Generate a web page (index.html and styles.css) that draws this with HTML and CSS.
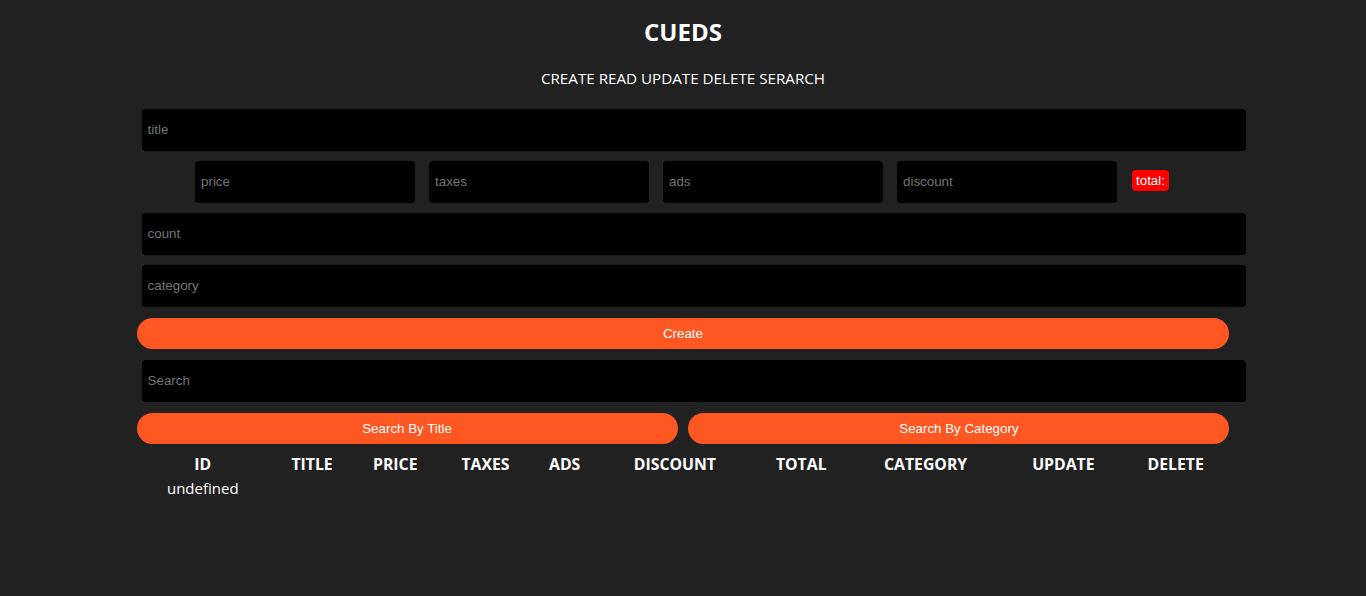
FILE: index.html
```
<!DOCTYPE html>
<html>
<head>
<meta charset="utf-8">
<title>CRUDS</title>
<link rel="stylesheet" href="styles.css">
</head>
<body>
<div class="crud">
  <div class="head">
    <h2>CUEDS</h2>
    <p>CREATE READ UPDATE DELETE SERARCH</p>
  </div>
  <div class="inputs">
    <input type="text" class="field" placeholder="title">
    <div class="price">
      <input type="number" class="small" placeholder="price">
      <input type="number" class="small" placeholder="taxes">
      <input type="number" class="small" placeholder="ads">
      <input type="number" class="small" placeholder="discount">
      <small class="total">total:</small>
    </div>
    <input type="number" class="field" placeholder="count">
    <input type="text" class="field" placeholder="category">
    <button class="btn btn-create">Create</button>
  </div>
  <div class="outputs">
    <input type="text" class="field" placeholder="Search">
    <div class="btnSearch">
      <button class="btn">Search By Title</button>
      <button class="btn">Search By Category</button>
    </div>
  </div>
  <table class="table">
    <thead>
      <tr>
        <th class="c1">ID</th>
        <th class="c2">TITLE</th>
        <th class="c3">PRICE</th>
        <th class="c4">TAXES</th>
        <th class="c5">ADS</th>
        <th class="c6">DISCOUNT</th>
        <th class="c7">TOTAL</th>
        <th class="c8">CATEGORY</th>
        <th class="c9">UPDATE</th>
        <th class="c10">DELETE</th>
      </tr>
    </thead>
    <tbody>
      <tr><td>undefined</td></tr>
    </tbody>
  </table>
</div>
</body>
</html>
```
FILE: styles.css
```
html, body {
  margin: 0;
  padding: 0;
}
body {
  background-color: #222121;
  color: #fff;
  font-family: "Open Sans", "Noto Sans", sans-serif;
}
.crud {
  width: 80%;
  margin: 0 auto;
}
.head {
  text-align: center;
}
.head h2 {
  margin: 16px 0 0;
  font-size: 24px;
  line-height: 32px;
  font-weight: 700;
}
.head p {
  margin: 19px 0 0;
  font-size: 15.2px;
  line-height: 22px;
}
.inputs {
  margin-top: 20px;
  display: flex;
  flex-direction: column;
}
input {
  box-sizing: border-box;
  height: 42px;
  border: none;
  outline: none;
  background: #000;
  color: #fff;
  border-radius: 4px;
  padding: 0 6px 2px;
  font-family: "Liberation Sans", Arial, sans-serif;
  font-size: 13.33px;
}
input::placeholder {
  color: #757575;
}
.field {
  display: block;
  width: calc(100% + 12px);
  margin: 0 0 10px 5px;
}
.price {
  display: flex;
  justify-content: center;
  align-items: center;
  gap: 14px;
  margin: 0 0 10px -2px;
}
.small {
  width: 220px;
}
.total {
  margin: 0 0 3px 1px;
  background: #f00;
  color: #fff;
  border-radius: 4px;
  padding: 0 4px;
  height: 21px;
  line-height: 21px;
  font-family: "Liberation Sans", Arial, sans-serif;
  font-size: 13.33px;
}
.btn {
  height: 31px;
  border: none;
  border-radius: 20px;
  background: #ff5722;
  color: #fff;
  font-family: "Liberation Sans", Arial, sans-serif;
  font-size: 13.33px;
  cursor: pointer;
}
.btn-create {
  width: 100%;
  margin: 1px 0 11px;
}
.outputs {
  display: flex;
  flex-direction: column;
}
.btnSearch {
  display: flex;
  justify-content: space-between;
  margin-top: 1px;
}
.btnSearch .btn {
  width: 49.5%;
}
.table {
  width: 100%;
  table-layout: fixed;
  border-spacing: 0;
  margin-top: 9px;
  text-align: center;
}
.table th {
  font-size: 15.8px;
  font-weight: 700;
  line-height: 22px;
  padding: 0;
}
.table td {
  font-size: 15px;
  line-height: 22px;
  padding: 2px 0 0;
}
.c1 { width: 132px; }
.c2 { width: 86px; }
.c3 { width: 80px; }
.c4 { width: 100px; }
.c5 { width: 58px; }
.c6 { width: 162px; }
.c7 { width: 90px; }
.c8 { width: 158px; }
.c9 { width: 117px; }
.c10 { width: 107px; }
```
